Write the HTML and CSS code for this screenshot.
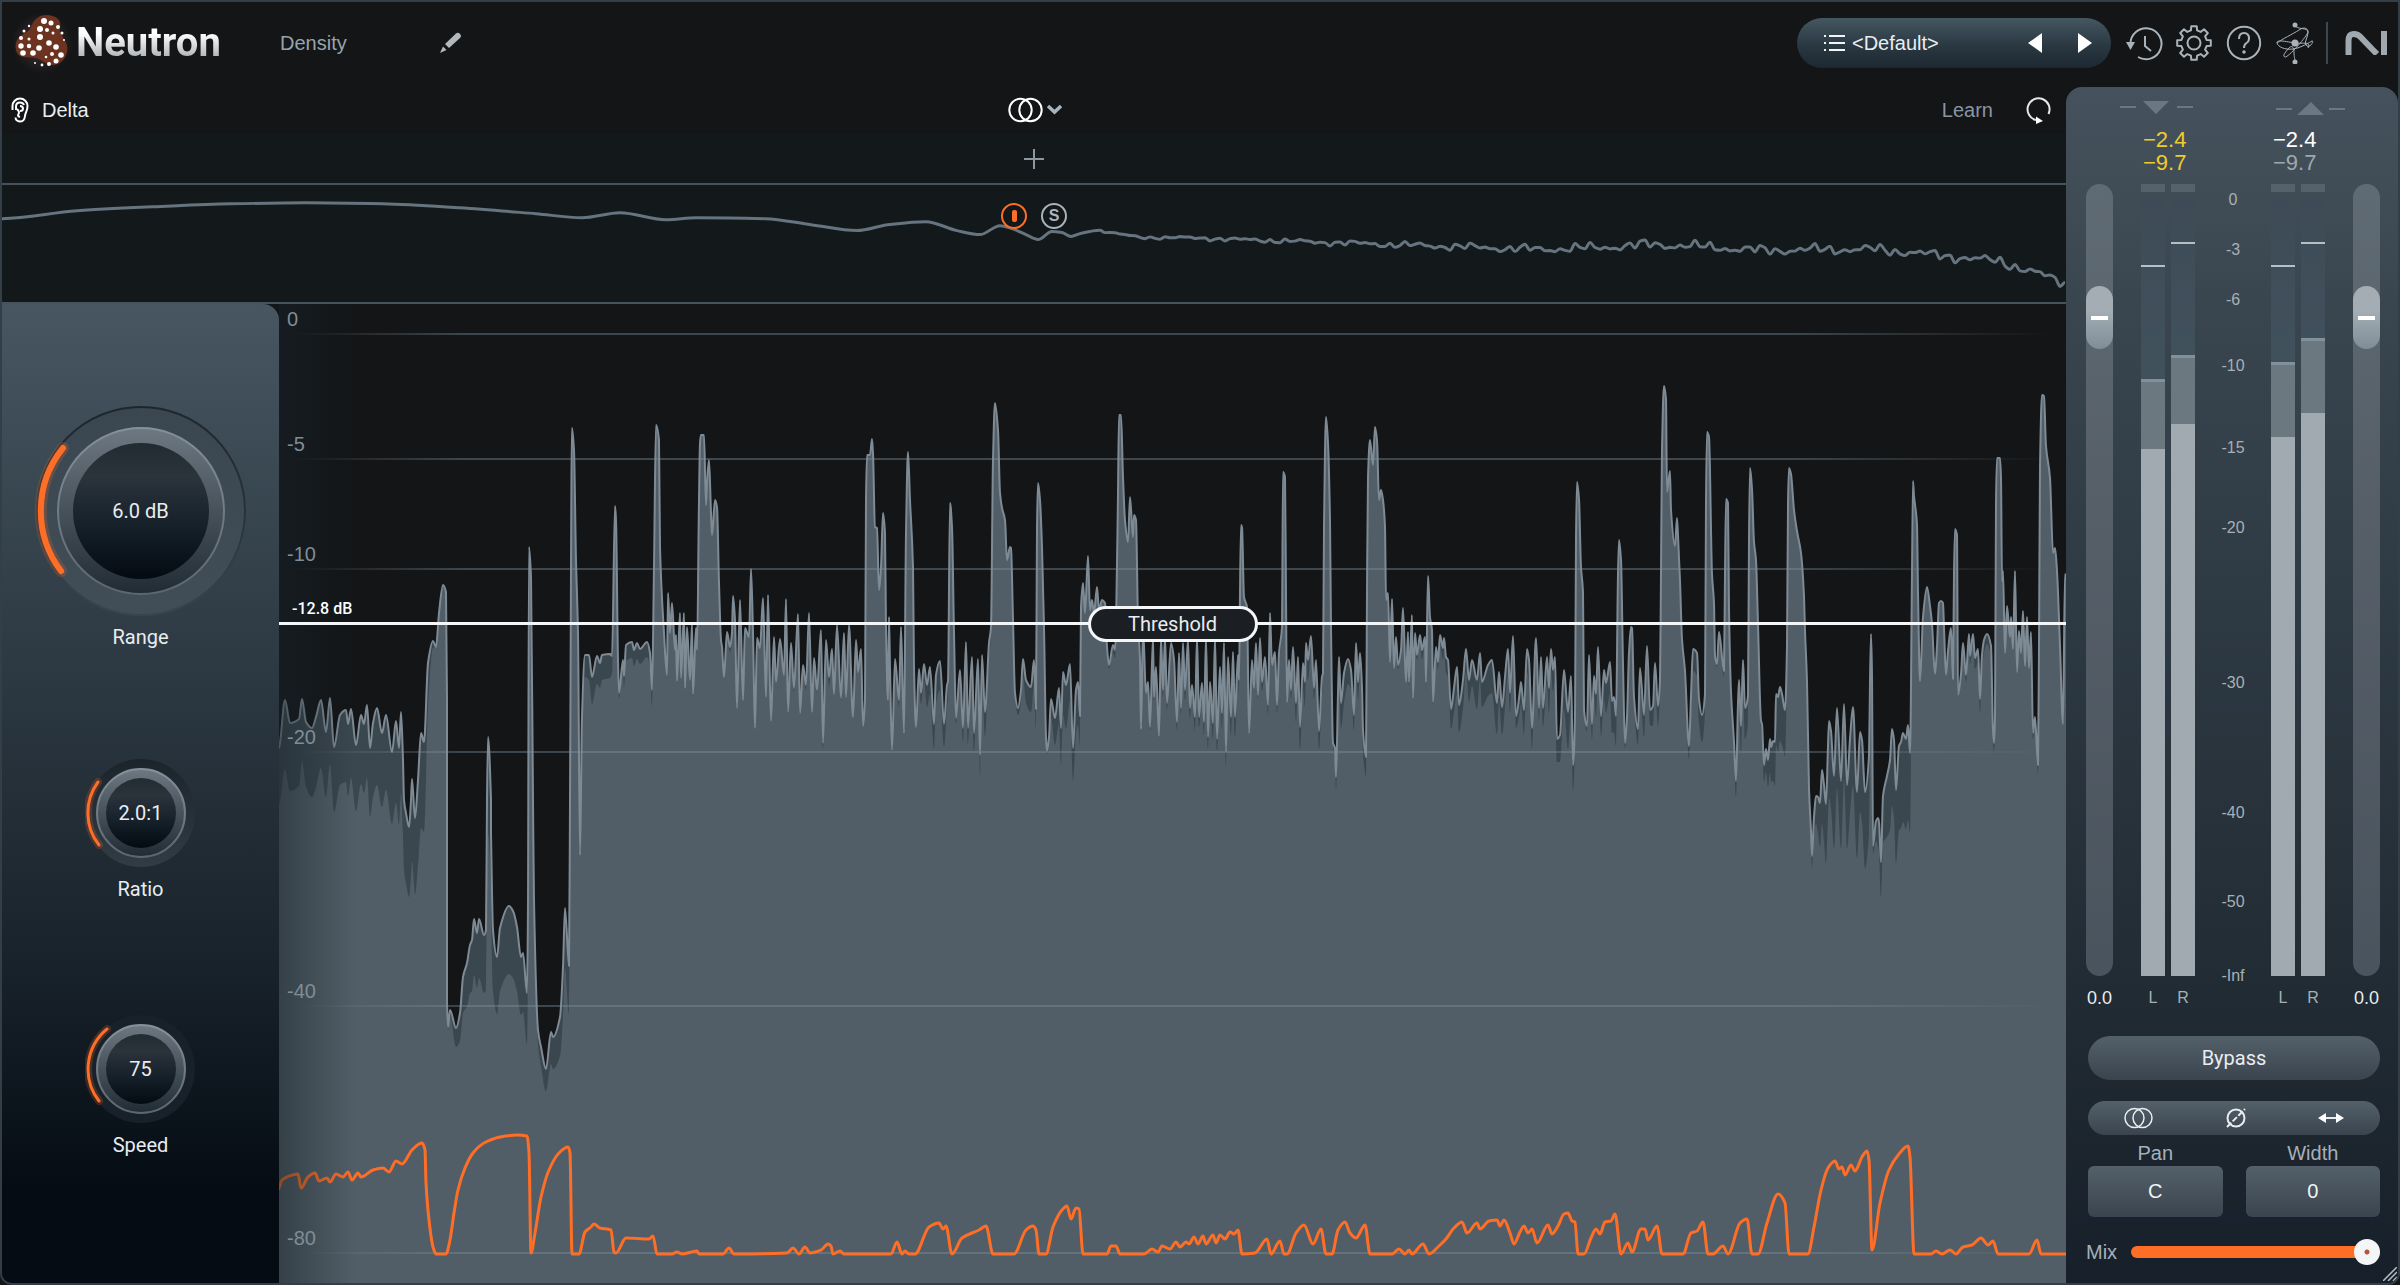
FILE: index.html
```html
<!DOCTYPE html>
<html lang="en">
<head>
    <meta charset="UTF-8">
    <meta name="viewport" content="width=device-width, initial-scale=1.0">
    <title>Neutron - Density</title>
    <link rel="stylesheet" href="styles.css">
</head>
<body>
<div id="plugin">
    <header id="topbar">
        <svg class="logo" viewBox="0 0 60 68" aria-hidden="true">
            <defs>
                <radialGradient id="glow"><stop offset="0.5" stop-color="#3a2a2c"/><stop offset="1" stop-color="#131517"/></radialGradient>
            </defs>
            <circle cx="30" cy="34" r="31" fill="url(#glow)" opacity=".7"/>
            <path d="M34 6c10 0 16 5 14 13-1 6 5 10 7 17 2 9-4 19-13 20-7 1-12-6-19-7S6 50 4 41s3-14 9-17 6-8 9-12 7-6 12-6z" fill="#6b3320"/>
            <g fill="#fff">
                <circle cx="32" cy="12" r="3"/><circle cx="39" cy="14" r="2.5"/><circle cx="46" cy="18" r="2"/>
                <circle cx="28" cy="20" r="3"/><circle cx="35" cy="21" r="2"/><circle cx="41" cy="24" r="1.5"/>
                <circle cx="50" cy="24" r="1.5"/><circle cx="52" cy="31" r="1"/><circle cx="17" cy="17" r="1.2"/>
                <circle cx="12" cy="22" r="1.5"/><circle cx="9" cy="29" r="2"/><circle cx="17" cy="30" r="1.5"/>
                <circle cx="28" cy="28" r="3"/><circle cx="9" cy="37" r="2.7"/><circle cx="17" cy="37" r="2.2"/>
                <circle cx="27" cy="39" r="2.8"/><circle cx="37" cy="34" r="2.8"/><circle cx="44" cy="38" r="2.8"/>
                <circle cx="11" cy="44" r="2.8"/><circle cx="21" cy="44" r="2.8"/><circle cx="40" cy="45" r="2"/>
                <circle cx="49" cy="46" r="2.8"/><circle cx="34" cy="48" r="1.3"/><circle cx="44" cy="52" r="2.5"/>
                <circle cx="37" cy="55" r="2"/><circle cx="30" cy="56" r="1.4"/><circle cx="23" cy="54" r="1"/>
            </g>
        </svg>
        <h1>Neutron</h1>
        <span class="module-name">Density</span>
        <button class="icon-btn" aria-label="Rename module">
            <svg width="24" height="24" viewBox="0 0 24 24"><path d="M7 13L18 2.500q2-1.500 4 .5t0 4L11 17z" fill="#b3b8bc"/><path d="M5 15.500l3.500 3.500L2 22z" fill="#b3b8bc"/></svg>
        </button>

        <div class="preset">
            <button class="preset-name">
                <svg width="22" height="18" viewBox="0 0 22 18" stroke="#f2f4f5" stroke-width="2"><path d="M0 2h2M5 2h16M0 9h2M5 9h16M0 16h2M5 16h16"/></svg>
                &lt;Default&gt;
            </button>
            <button class="step" aria-label="Previous preset"><svg width="14" height="20" viewBox="0 0 14 20"><path d="M14 0v20L0 10z" fill="#fff"/></svg></button>
            <button class="step" aria-label="Next preset"><svg width="14" height="20" viewBox="0 0 14 20"><path d="M0 0v20l14-10z" fill="#fff"/></svg></button>
        </div>

        <nav class="tools">
            <button class="icon-btn" aria-label="History">
                <svg width="40" height="40" viewBox="0 0 40 40"><path d="M6.500 21A15.500 15.500 0 1 1 14 34" /><path d="M21 13v10l6 5"/><path d="M2 19h9l-4.500 8z" fill="#aab3ba" stroke="none"/></svg>
            </button>
            <button class="icon-btn" aria-label="Settings">
                <svg width="40" height="40" viewBox="-20 -20 40 40"><circle r="6.500"/><path d="M-3.100-12.600L-2.700-16.800L2.700-16.800L3.100-12.600L6.700-11.100L10-13.800L13.800-10L11.100-6.700L12.600-3.100L16.800-2.700L16.800 2.700L12.600 3.100L11.100 6.700L13.800 10L10 13.800L6.700 11.100L3.100 12.600L2.700 16.800L-2.700 16.800L-3.100 12.600L-6.700 11.100L-10 13.800L-13.800 10L-11.100 6.700L-12.600 3.100L-16.800 2.700L-16.800-2.700L-12.600-3.100L-11.100-6.700L-13.800-10L-10-13.800L-6.700-11.100Z" stroke-linejoin="round"/></svg>
            </button>
            <button class="icon-btn" aria-label="Help">
                <svg width="40" height="40" viewBox="0 0 40 40"><circle cx="20" cy="20" r="16.200"/><path d="M15 16q0-6 5-6t5 5.500q0 3-2.500 4.500T20 25"/><circle cx="20" cy="29" r="1.800" fill="#aab3ba" stroke="none"/></svg>
            </button>
            <button class="icon-btn" aria-label="Connections">
                <svg width="40" height="42" viewBox="0 0 40 42" class="thin"><path d="M21 3C22 8 34 5 34 10S29 22 33 24 40 18 38 19 27 26 19 27 4 25 3 21 14 20 21 21 38 19 34 26"/><path d="M3 21C8 17 19 12 25 8S34 7 34 10 14 36 11 35 11 31 14 27 20 24 20 30 21 36 21 40"/><g fill="#aab3ba" stroke="none"><circle cx="21" cy="3" r="2.500"/><circle cx="21" cy="40" r="2.500"/><circle cx="21" cy="21" r="3.500"/></g></svg>
            </button>
        </nav>
        <svg class="brand" width="42" height="24" viewBox="0 0 42 24" aria-label="NI"><path d="M3.500 24V10q0-7 5-7t8 4L27 18q5 5 5 5" stroke="#a0a9b0" stroke-width="6"/><path d="M36 0h6v24h-6z" fill="#a0a9b0"/></svg>
    </header>

    <main id="workspace">
        <section id="module">
            <div class="module-bar">
                <button class="delta">
                    <svg width="18" height="26" viewBox="0 0 18 26"><path d="M1.500 13V9a7.500 7.500 0 0 1 15 0c0 5-2 6-2.500 10s-2 5.500-4.500 5.500S4.500 23 4.500 20.500M5 13V9.500q0-4 4-4 3 0 4 2.500M9 9q3 0 3 2.500T9 14M6 12q3 3 1.500 5T9 20" /></svg>
                    Delta
                </button>
                <button class="stereo-mode" aria-label="Stereo mode">
                    <svg width="54" height="26" viewBox="0 0 54 26"><circle cx="12.500" cy="13" r="11.200"/><circle cx="22.500" cy="13" r="11.200"/><path d="M40 9l6.500 6L53 9" stroke="#a9b3ba" stroke-width="3.500"/></svg>
                </button>
                <div class="learn">
                    <button>Learn</button>
                    <button class="icon-btn" aria-label="Restart learning">
                        <svg width="26" height="28" viewBox="0 0 26 28"><path d="M10 24A11 11 0 1 1 22.500 18" /><path d="M10 20.500v7.500l7-3z" fill="#fff" stroke="none"/></svg>
                    </button>
                </div>
            </div>
            <div class="bands">
                <button class="icon-btn" aria-label="Add band"><svg width="22" height="22" viewBox="0 0 22 22" stroke="#8c979f" stroke-width="2"><path d="M11 1v20M1 11h20"/></svg></button>
            </div>
            <div class="spectrum">
                <svg class="fill" viewBox="2 185 2064 118" preserveAspectRatio="none"><path id="spectrumLine"/></svg>
                <div class="band-tags">
                    <button class="tag on" aria-label="Band enabled"><i></i></button>
                    <button class="tag">S</button>
                </div>
            </div>

            <div class="editor">
                <aside class="knobs">
                    <div class="knob big">
                        <svg viewBox="0 0 220 220" aria-hidden="true">
                            <defs>
                                <linearGradient id="well" x2="0" y2="1"><stop stop-color="#3a4750"/><stop offset="1" stop-color="#414e58"/></linearGradient>
                                <linearGradient id="wellEdge" x2="0" y2="1"><stop stop-color="#1d262d"/><stop offset=".5" stop-color="#28323a"/><stop offset="1" stop-color="#39454e"/></linearGradient>
                                <linearGradient id="ring" x2="0" y2="1"><stop stop-color="#6d7882"/><stop offset="1" stop-color="#202b33"/></linearGradient>
                                <linearGradient id="ringEdge" x2="0" y2="1"><stop stop-color="#84909a"/><stop offset="1" stop-color="#5a6670"/></linearGradient>
                                <linearGradient id="face" x2="0" y2="1"><stop stop-color="#222b32"/><stop offset=".25" stop-color="#2b333b"/><stop offset=".6" stop-color="#16212a"/><stop offset="1" stop-color="#030a12"/></linearGradient>
                                <linearGradient id="wellDark" x2="0" y2="1"><stop stop-color="#1b242b"/><stop offset="1" stop-color="#323c45"/></linearGradient>
                            </defs>
                            <circle cx="110" cy="110" r="104" fill="url(#well)" stroke="url(#wellEdge)" stroke-width="2"/>
                            <circle cx="110" cy="110" r="83" fill="url(#ring)" stroke="url(#ringEdge)" stroke-width="2"/>
                            <circle cx="110" cy="110" r="68" fill="url(#face)"/>
                            <path class="halo" d="M32 47A100 100 0 0 0 30 170"/>
                            <path class="arc" d="M32 47A100 100 0 0 0 30 170"/>
                        </svg>
                        <input id="range" value="6.0 dB">
                        <label for="range">Range</label>
                    </div>
                    <div class="knob">
                        <svg viewBox="0 0 112 112" aria-hidden="true">
                            <circle cx="56" cy="56" r="54" fill="url(#wellDark)"/>
                            <circle cx="56" cy="56" r="44" fill="url(#ring)" stroke="url(#ringEdge)" stroke-width="2"/>
                            <circle cx="56" cy="56" r="35" fill="url(#face)"/>
                            <path class="halo" d="M13 25A52 52 0 0 0 14 88"/>
                            <path class="arc" d="M13 25A52 52 0 0 0 14 88"/>
                        </svg>
                        <input id="ratio" value="2.0:1">
                        <label for="ratio">Ratio</label>
                    </div>
                    <div class="knob">
                        <svg viewBox="0 0 112 112" aria-hidden="true">
                            <circle cx="56" cy="56" r="54" fill="#182129"/>
                            <circle cx="56" cy="56" r="44" fill="url(#ring)" stroke="url(#ringEdge)" stroke-width="2"/>
                            <circle cx="56" cy="56" r="35" fill="url(#face)"/>
                            <path class="halo" d="M22 16A52 52 0 0 0 14 88"/>
                            <path class="arc" d="M22 16A52 52 0 0 0 14 88"/>
                        </svg>
                        <input id="speed" value="75">
                        <label for="speed">Speed</label>
                    </div>
                </aside>

                <div class="plot">
                    <svg class="fill" viewBox="279 304 1787 979" preserveAspectRatio="none">
                        <defs>
                            <linearGradient id="fade"><stop stop-color="#7d929e" stop-opacity="0"/><stop offset=".1" stop-color="#7d929e" stop-opacity=".4"/><stop offset=".85" stop-color="#7d929e" stop-opacity=".4"/><stop offset="1" stop-color="#7d929e" stop-opacity="0"/></linearGradient>
                        </defs>
                        <path id="inputFill" fill="#3b474f"/>
                        <path id="outputFill" fill="#525e67"/>
                        <path id="inputLine"/>
                        <g id="grid" fill="url(#fade)"></g>
                        <path id="reductionLine"/>
                    </svg>
                    <div class="edge-fade"></div>
                    <div id="axis"></div>
                    <div class="threshold">
                        <span class="threshold-value">-12.8 dB</span>
                        <button>Threshold</button>
                    </div>
                </div>
            </div>
        </section>

        <aside id="output">
            <div class="io-arrows">
                <svg width="74" height="14" viewBox="0 0 74 14"><path d="M0 5h16v2H0zM57 5h16v2H57zM23 0h26L36 13z"/></svg>
                <svg width="70" height="14" viewBox="0 0 70 14"><path d="M0 7h16v2H0zM53 7h16v2H53zM21 14h27L35 1z"/></svg>
            </div>
            <div class="meters">
                <div class="readout in">&minus;2.4<br>&minus;9.7</div>
                <div class="readout out">&minus;2.4<br><span>&minus;9.7</span></div>
                <input class="fader left" type="range" value="86" aria-label="Input gain">
                <div class="pair pair-in"></div>
                <div class="scale" id="scale"></div>
                <div class="pair pair-out"></div>
                <input class="fader right" type="range" value="86" aria-label="Output gain">
                <span class="gain g1">0.0</span>
                <div class="lr lr1"><span>L</span><span>R</span></div>
                <div class="lr lr2"><span>L</span><span>R</span></div>
                <span class="gain g2">0.0</span>
            </div>
            <button class="bypass">Bypass</button>
            <div class="modes">
                <button aria-label="Sum to mono"><svg width="30" height="22" viewBox="0 0 30 22"><circle cx="10.500" cy="11" r="9.500"/><circle cx="18.500" cy="11" r="9.500"/></svg></button>
                <button aria-label="Invert phase"><svg width="20" height="22" viewBox="0 0 20 22"><circle cx="10" cy="11" r="8.500"/><path d="M1 20L19 2" stroke-dasharray="6 2"/></svg></button>
                <button aria-label="Swap channels"><svg width="26" height="12" viewBox="0 0 26 12"><path d="M5 6h16" stroke-width="2"/><path d="M0 6l8-5v10zM26 6l-8-5v10z" fill="#fff" stroke="none"/></svg></button>
            </div>
            <div class="fields">
                <label>Pan<input value="C"></label>
                <label>Width<input value="0"></label>
            </div>
            <div class="mix">
                <label for="mix">Mix</label>
                <input id="mix" type="range" value="100">
            </div>
            <svg class="grip" width="14" height="14" viewBox="0 0 14 14" stroke="#b5bdc3" stroke-width="1.500"><path d="M0 14L14 0M5 14l9-9M10 14l4-4"/></svg>
        </aside>
    </main>
</div>
<script src="script.js"></script>
</body>
</html>
```
FILE: styles.css
```css
* {
    box-sizing: border-box;
}
body {
    margin: 0;
    background: #131517;
    color: #e9edf0;
    font-family: "Liberation Sans", Arial, sans-serif;
    font-size: 20px;
    line-height: 24px;
}
button, input {
    font: inherit;
    color: inherit;
    background: none;
    border: 0;
    padding: 0;
    margin: 0;
}
svg {
    display: block;
    fill: none;
}
#plugin {
    height: 100vh;
    display: flex;
    flex-direction: column;
    border: 2px solid #343e47;
    border-radius: 0 0 12px 12px;
    overflow: hidden;
}

/* top bar */
#topbar {
    height: 84px;
    flex: none;
    display: flex;
    align-items: center;
    padding: 0 11px 2px 10px;
}
.logo {
    width: 60px;
    height: 68px;
}
h1 {
    margin: 0 0 0 4px;
    width: 204px;
    font: 700 40px/48px Roboto, sans-serif;
    background: linear-gradient(#fff 30%, #a9adb0 85%);
    -webkit-background-clip: text;
    background-clip: text;
    color: transparent;
}
.module-name {
    width: 158px;
    color: #98a3ac;
}
.preset {
    margin-left: auto;
    width: 314px;
    height: 50px;
    border-radius: 25px;
    background: linear-gradient(#455761, #2a3842 55%, #1c2832);
    display: flex;
    align-items: center;
    padding: 0 1px 0 27px;
}
.preset-name {
    flex: 1;
    display: flex;
    align-items: center;
    gap: 6px;
}
.step {
    width: 50px;
    display: flex;
    justify-content: center;
}
.tools {
    display: flex;
    gap: 10px;
    margin-left: 13px;
    padding-right: 12px;
    border-right: 2px solid #3d474f;
}
.tools svg {
    stroke: #aab3ba;
    stroke-width: 2;
}
.tools svg.thin {
    stroke-width: 1;
}
.brand {
    margin-left: 17px;
}

/* layout */
#workspace {
    flex: 1;
    min-height: 0;
    display: grid;
    grid-template-columns: 1fr 332px;
}
#module {
    display: flex;
    flex-direction: column;
    min-width: 0;
}
.module-bar {
    height: 48px;
    display: grid;
    grid-template-columns: 1fr auto 1fr;
    align-items: center;
    padding: 0 14px 0 9px;
}
.delta {
    display: flex;
    align-items: center;
    gap: 13px;
}
.delta svg {
    stroke: #fff;
    stroke-width: 2;
}
.stereo-mode {
    padding-left: 7px;
}
.stereo-mode svg {
    stroke: #fff;
    stroke-width: 2;
}
.learn {
    display: flex;
    align-items: center;
    justify-content: flex-end;
    gap: 33px;
    color: #8a96a0;
}
.learn svg {
    stroke: #e4e8ea;
    stroke-width: 2;
}
.bands {
    height: 51px;
    display: flex;
    align-items: center;
    justify-content: center;
    background: #13181b;
    border-bottom: 2px solid #46535c;
}
.spectrum {
    height: 119px;
    position: relative;
    background: #13181b;
    border-bottom: 2px solid #46535c;
}
.fill {
    position: absolute;
    inset: 0;
    width: 100%;
    height: 100%;
}
#spectrumLine {
    stroke: #65747e;
    stroke-width: 3;
    stroke-linejoin: round;
}
.band-tags {
    position: relative;
    display: flex;
    justify-content: center;
    gap: 14px;
    padding-top: 18px;
}
.tag {
    width: 26px;
    height: 26px;
    border: 2px solid #aab3ba;
    border-radius: 50%;
    color: #aab3ba;
    font: 700 16px/20px "Liberation Sans", sans-serif;
    display: flex;
    align-items: center;
    justify-content: center;
}
.tag.on {
    border-color: #ff6e26;
}
.tag i {
    width: 5px;
    height: 12px;
    border-radius: 2px;
    background: #ff6e26;
}
.editor {
    flex: 1;
    min-height: 0;
    display: flex;
}

/* knobs */
.knobs {
    width: 277px;
    display: flex;
    flex-direction: column;
    align-items: center;
    padding-top: 97px;
    border-radius: 0 16px 0 0;
    background: linear-gradient(#475661, #303d47 32%, #242f38 50%, #18222b 68%, #050c14 90%);
}
.knob {
    width: 112px;
    margin-bottom: 112px;
    position: relative;
    display: flex;
    flex-direction: column;
    align-items: center;
    font-family: Roboto, sans-serif;
}
.knob.big {
    width: 220px;
    margin-bottom: 108px;
}
.knob svg {
    width: 100%;
}
.knob input {
    position: absolute;
    top: 44px;
    left: 0;
    width: 100%;
    text-align: center;
}
.knob.big input {
    top: 98px;
}
.knob label {
    margin-top: 8px;
}
.knob.big label {
    margin-top: 4px;
}
.arc {
    stroke: #ff6e26;
    stroke-width: 3;
    stroke-linecap: round;
}
.halo {
    stroke: #ff6e26;
    stroke-opacity: .2;
    stroke-width: 8;
    stroke-linecap: round;
}
.big .arc {
    stroke-width: 6;
}
.big .halo {
    stroke-width: 12;
}

/* level plot */
.plot {
    flex: 1;
    position: relative;
    background: #131517;
    overflow: hidden;
}
#inputLine {
    stroke: #7e8b95;
    stroke-width: 2;
    stroke-linejoin: round;
}
#reductionLine {
    stroke: #ff6e26;
    stroke-width: 3;
    stroke-linejoin: round;
}
.edge-fade {
    position: absolute;
    inset: 0 auto 0 0;
    width: 76px;
    background: linear-gradient(90deg, rgba(24, 35, 42, .5), rgba(24, 35, 42, 0));
}
#axis span {
    position: absolute;
    left: 8px;
    color: #7f8d97;
    transform: translateY(-27px);
}
.threshold {
    position: absolute;
    left: 0;
    right: 0;
    top: 32.5%;
    height: 3px;
    background: #f4f6f7;
    font-family: Roboto, sans-serif;
}
.threshold-value {
    position: absolute;
    left: 13px;
    bottom: 4px;
    color: #fff;
    font-size: 16px;
    font-weight: 500;
}
.threshold button {
    position: absolute;
    left: 50%;
    top: -16px;
    width: 170px;
    height: 36px;
    margin-left: -85px;
    border: 3px solid #f4f6f7;
    border-radius: 18px;
    background: #1b1e23;
    color: #e9edf0;
}

/* output panel */
#output {
    position: relative;
    display: flex;
    flex-direction: column;
    margin-top: 1px;
    padding: 14px 18px 18px 20px;
    border-radius: 16px 16px 0 0;
    background: linear-gradient(#45525d, #3a464f 18%, #2e3a44 42%, #222c34 74%, #17202a);
}
.io-arrows {
    display: flex;
    justify-content: space-between;
    padding: 0 34px;
    margin-bottom: 13px;
}
.io-arrows svg {
    fill: #6b7882;
}
.meters {
    flex: 1;
    min-height: 0;
    display: grid;
    grid-template-columns: 27px 54px 20px 54px 27px;
    grid-template-rows: 46px 1fr 24px;
    column-gap: 28px;
    row-gap: 10px;
    color: #a6b0b7;
    font-size: 16px;
}
.readout {
    grid-row: 1;
    font-size: 22px;
    line-height: 23px;
    padding-left: 2px;
    color: #fff;
}
.readout span {
    color: #9ea8af;
}
.readout.in {
    grid-column: 2;
    color: #efcb2c;
}
.readout.out {
    grid-column: 4;
}
.fader {
    -webkit-appearance: none;
    appearance: none;
    writing-mode: vertical-lr;
    direction: rtl;
    grid-row: 2;
    width: 27px;
    height: 100%;
    border-radius: 14px;
    background: linear-gradient(#5f6b74, #565f68 40%, #4a545e);
}
.fader.left {
    grid-column: 1;
}
.fader.right {
    grid-column: 5;
}
.fader::-webkit-slider-thumb {
    -webkit-appearance: none;
    width: 27px;
    height: 63px;
    border-radius: 14px;
    background:
        linear-gradient(#fff, #fff) center / 17px 4px no-repeat,
        linear-gradient(#a3adb3, #a3adb3 40%, #7f8d99);
}
.pair {
    grid-row: 2;
    display: flex;
    gap: 6px;
}
.pair-in {
    grid-column: 2;
}
.pair-out {
    grid-column: 4;
}
.channel {
    flex: 1;
    display: flex;
    flex-direction: column;
    gap: 8px;
}
.clip {
    height: 8px;
    background: #56626b;
}
.bar {
    flex: 1;
    position: relative;
    background: linear-gradient(#3e4b57, #41515c 20%);
}
.bar div {
    position: absolute;
    left: 0;
    right: 0;
    bottom: 0;
}
.bar .hold {
    height: 2px;
    bottom: auto;
    background: #b5bfc5;
}
.bar .peak {
    background: #6c7880;
    border-top: 3px solid #82909b;
}
.bar .rms {
    background: #a0aab0;
}
.scale {
    grid-column: 3;
    grid-row: 2;
    position: relative;
    margin-top: 16px;
}
.scale span {
    position: absolute;
    left: 50%;
    transform: translate(-50%, -50%);
    white-space: nowrap;
}
.gain {
    grid-row: 3;
    justify-self: center;
    font-size: 18px;
    color: #e9edf0;
}
.g1 {
    grid-column: 1;
}
.g2 {
    grid-column: 5;
}
.lr {
    grid-row: 3;
    display: flex;
    gap: 6px;
    text-align: center;
}
.lr span {
    flex: 1;
}
.lr1 {
    grid-column: 2;
}
.lr2 {
    grid-column: 4;
}
.bypass, .modes {
    margin: 26px 0 21px 2px;
    height: 44px;
    border-radius: 22px;
    background: linear-gradient(#53606a, #3a444e);
    font-family: Roboto, sans-serif;
}
.modes {
    margin: 0 0 8px 2px;
    height: 34px;
    display: flex;
    align-items: center;
    justify-content: space-between;
    padding: 0 36px;
}
.modes svg {
    stroke: #e9edf0;
    stroke-width: 2;
}
.modes button:first-child svg {
    stroke-width: 1.5;
}
.fields {
    display: flex;
    justify-content: space-between;
    gap: 23px;
    padding-left: 2px;
    color: #a6b0b7;
    line-height: 20px;
    text-align: center;
}
.fields label {
    flex: 1;
}
.fields input {
    display: block;
    width: 100%;
    height: 51px;
    margin-top: 3px;
    border-radius: 6px;
    background: linear-gradient(#53606a, #3a444e);
    color: #f2f4f5;
    text-align: center;
}
.mix {
    display: flex;
    align-items: center;
    gap: 14px;
    margin-top: 22px;
    height: 26px;
    color: #a6b0b7;
}
.mix input {
    -webkit-appearance: none;
    appearance: none;
    flex: 1;
    min-width: 0;
    height: 12px;
    border-radius: 6px;
    background: #ff6e26;
}
.mix input::-webkit-slider-thumb {
    -webkit-appearance: none;
    width: 26px;
    height: 26px;
    border-radius: 50%;
    background: radial-gradient(circle, #b5563a 2px, #f4f5f6 3px);
}
.grip {
    position: absolute;
    right: 1px;
    bottom: 2px;
}
```
FILE: script.js
```js
// input level trace, x,y in plot units
const level = `279,748 280,743 285,700 290,723 299,719 302,699 306,722 312,728 316,717 321,700 326,732 330,698 334,747 340,715 346,710 348,724 351,709
356,745 361,715 364,724 367,705 370,748 373,723 377,708 382,733 386,715 392,752 396,721 399,748 401,712 403,760 404,800 406,813 409,827
411,800 412,779 415,818 418,780 421,733 424,742 428,663 433,641 436,647 439,613 443,585 446,592 447,700 447,1000 448,1027 450,1010 456,1028
460,1013 463,977 467,963 470,945 472,940 474,919 477,933 479,919 484,935 486,930 487,800 488,737 491,800 491,833 493,930 497,957 500,928
509,906 513,911 517,927 521,957 523,953 527,993 528,900 529,547 531,577 533,800 534,900 538,1030 541,1047 546,1069 551,1032 553,1037
560,1017 563,967 565,908 569,966 570,800 572,428 574,450 576,560 578,633 580,855 582,717 585,655 589,655 592,677 597,656 600,663 602,655
610,654 612,656 615,506 616,520 618,660 619,693 623,660 624,676 626,645 632,642 634,650 637,643 640,649 647,642 650,653 652,690 654,567
656,425 659,440 660,547 664,633 667,675 668,593 670,633 672,603 675,650 676,635 677,681 680,613 681,678 684,613 685,688 687,627 690,680
692,623 693,694 696,628 697,650 699,500 700,443 701,435 704,435 706,505 707,483 709,460 711,513 712,535 715,500 717,507 719,583 721,640
722,647 724,677 727,632 730,647 732,633 733,596 735,620 737,708 740,600 743,700 745,628 749,637 751,569 753,633 755,728 757,638 760,648
763,598 766,697 768,595 771,721 774,637 776,682 780,639 784,675 786,599 788,712 791,643 794,688 798,614 800,713 803,665 806,685 809,613
812,712 814,658 817,690 821,630 823,743 826,640 829,677 832,649 834,694 837,625 841,698 844,633 846,697 849,625 853,717 856,640 858,672
861,649 863,726 865,700 866,500 867,455 870,455 872,439 873,453 875,527 877,528 879,590 881,567 883,513 885,533 886,627 888,700 889,617
890,667 892,750 895,659 899,700 901,627 904,733 906,533 908,452 910,500 913,567 914,667 916,727 919,669 921,693 924,664 927,685 930,667
934,724 936,675 940,661 944,724 947,685 948,681 950,503 952,527 954,633 956,718 960,670 963,728 966,642 968,728 972,657 974,733 978,659
980,755 982,655 985,712 989,643 991,627 993,460 995,403 998,430 1000,493 1002,508 1005,520 1007,560 1010,547 1011,548 1013,620 1015,693
1018,708 1021,690 1023,659 1026,680 1031,687 1034,660 1036,709 1037,527 1038,483 1040,500 1042,547 1044,627 1046,737 1047,751 1049,737
1051,699 1055,718 1059,688 1061,728 1063,672 1066,685 1070,664 1073,748 1076,690 1078,682 1080,716 1081,607 1083,583 1085,613 1088,556
1090,610 1092,600 1094,613 1097,587 1099,610 1102,600 1105,603 1107,647 1109,665 1113,645 1115,650 1116,627 1118,493 1119,415 1121,415
1123,477 1125,520 1128,542 1130,497 1133,537 1134,515 1136,520 1138,620 1140,660 1141,729 1143,627 1146,693 1148,682 1150,727 1153,637
1154,697 1156,667 1159,736 1161,637 1163,690 1165,637 1167,703 1171,643 1174,660 1177,722 1179,653 1181,708 1183,643 1185,690 1188,640
1190,708 1192,685 1195,717 1197,637 1199,717 1202,683 1204,722 1206,637 1208,737 1210,682 1213,723 1215,637 1217,739 1220,667 1222,713
1224,643 1226,752 1228,657 1231,717 1233,652 1235,717 1238,655 1239,680 1240,593 1241,525 1242,527 1244,597 1247,607 1249,733 1252,660
1254,688 1256,643 1258,695 1260,638 1262,682 1265,657 1268,705 1270,613 1272,665 1275,652 1277,705 1279,653 1282,627 1283,472 1285,477
1286,593 1287,702 1289,660 1291,690 1293,647 1296,703 1298,657 1300,727 1303,663 1305,682 1306,643 1308,660 1311,636 1314,688 1316,660
1319,731 1322,677 1323,673 1324,527 1326,417 1328,443 1330,520 1331,627 1333,743 1335,748 1336,777 1338,693 1339,657 1341,703 1344,673
1348,659 1351,670 1354,715 1356,643 1358,682 1360,653 1362,688 1363,730 1366,757 1367,593 1368,477 1370,440 1373,465 1375,427 1377,440
1379,500 1381,490 1383,500 1385,527 1386,600 1388,593 1390,662 1392,599 1394,668 1396,637 1398,665 1401,650 1403,608 1406,682 1408,632
1409,682 1412,615 1413,698 1415,633 1417,655 1420,635 1422,650 1425,637 1426,682 1428,576 1430,617 1432,630 1433,702 1436,647 1438,662
1440,635 1443,648 1444,638 1446,657 1448,660 1451,709 1454,688 1457,667 1459,705 1463,680 1466,649 1469,680 1472,660 1477,680 1480,653
1482,682 1488,665 1492,660 1497,703 1499,672 1502,707 1505,677 1508,649 1510,693 1513,636 1516,716 1520,690 1521,682 1524,710 1527,649
1529,660 1532,728 1536,638 1539,708 1541,657 1543,708 1547,657 1549,688 1551,649 1553,670 1555,657 1557,739 1560,735 1564,670 1568,712
1571,676 1573,765 1575,717 1576,539 1577,482 1579,499 1581,567 1583,592 1584,710 1587,726 1589,655 1592,724 1594,676 1596,694 1598,647
1601,716 1604,670 1606,683 1610,662 1612,701 1614,697 1616,716 1618,574 1619,540 1621,560 1623,664 1625,743 1627,717 1629,653 1631,627
1632,628 1634,697 1638,729 1640,668 1644,715 1647,646 1650,710 1653,706 1655,663 1658,706 1660,681 1661,574 1662,449 1664,386 1666,399
1667,492 1670,471 1671,510 1675,546 1677,518 1678,535 1680,581 1682,639 1685,671 1689,746 1691,696 1693,649 1697,653 1699,699 1702,715
1705,694 1706,503 1707,432 1709,437 1712,574 1714,603 1715,656 1717,664 1719,632 1724,671 1725,574 1726,499 1728,503 1729,610 1731,692
1734,742 1736,781 1738,703 1739,680 1741,726 1743,660 1745,708 1748,696 1749,539 1750,468 1752,489 1754,542 1756,560 1758,624 1761,721
1762,724 1764,765 1766,749 1768,760 1770,739 1771,747 1773,741 1775,742 1776,694 1778,697 1780,687 1782,694 1785,710 1787,646 1788,503
1789,468 1791,474 1794,510 1797,531 1801,553 1804,596 1805,631 1807,681 1809,789 1811,831 1812,856 1814,817 1816,796 1818,797 1820,803
1822,770 1824,785 1826,804 1828,746 1829,721 1831,731 1834,776 1837,708 1841,781 1844,704 1847,785 1850,739 1853,707 1857,792 1860,732
1862,740 1865,792 1869,756 1870,681 1871,634 1872,674 1873,846 1876,821 1878,818 1879,822 1881,862 1883,796 1887,776 1890,760 1892,729
1894,740 1896,790 1899,746 1901,742 1903,733 1906,739 1908,725 1910,753 1912,574 1913,481 1914,496 1917,524 1918,592 1920,681 1923,617
1927,587 1930,606 1932,624 1935,674 1937,646 1939,603 1941,601 1943,603 1944,628 1946,675 1948,651 1951,628 1953,679 1954,574 1955,529
1957,535 1958,695 1961,674 1963,643 1966,675 1969,634 1970,656 1973,634 1975,658 1978,649 1980,699 1982,655 1984,640 1987,634 1991,646
1993,731 1994,743 1995,717 1996,503 1997,458 2000,458 2001,478 2002,581 2003,571 2005,653 2007,606 2010,637 2011,617 2013,649 2015,571
2017,672 2019,631 2021,653 2023,611 2025,666 2027,617 2029,668 2031,632 2033,733 2035,717 2038,765 2039,646 2040,467 2042,395 2044,396
2046,446 2050,478 2053,553 2055,548 2057,571 2060,646 2063,724 2065,574 2067,581`;

// gain reduction trace, 1254 is no reduction
const reduction = `278,1190 282,1180 287,1177 298,1174 301,1188 308,1177 315,1173 319,1181 327,1178 330,1182 336,1174 343,1177 348,1172 352,1180 358,1173
361,1177 373,1170 383,1168 389,1172 396,1161 402,1164 412,1150 422,1143 425,1150 426,1183 429,1220 433,1247 436,1254 446,1254 450,1240
454,1213 458,1190 465,1168 473,1153 484,1143 500,1137 517,1135 527,1136 529,1153 531,1253 535,1233 541,1197 549,1170 559,1153 568,1147
570,1153 572,1254 579,1254 585,1232 591,1227 594,1224 600,1228 611,1230 614,1252 616,1253 626,1238 649,1239 653,1236 657,1254 672,1254
677,1252 682,1254 697,1251 699,1254 723,1254 729,1248 734,1254 787,1253 793,1248 799,1254 805,1247 810,1253 821,1250 828,1244 831,1246
833,1254 840,1251 844,1254 891,1254 897,1242 902,1254 905,1251 909,1254 915,1254 929,1227 939,1223 943,1229 946,1226 952,1254 962,1238
979,1230 986,1226 993,1254 1014,1254 1026,1230 1033,1226 1036,1230 1039,1254 1046,1254 1053,1227 1062,1210 1067,1206 1071,1219 1076,1208
1079,1209 1083,1254 1107,1254 1111,1246 1116,1246 1120,1254 1144,1254 1152,1249 1158,1252 1162,1246 1170,1249 1176,1242 1180,1247
1186,1242 1189,1244 1194,1237 1198,1244 1203,1236 1206,1244 1213,1235 1216,1243 1220,1235 1225,1239 1230,1232 1234,1234 1238,1230
1242,1254 1255,1253 1267,1239 1271,1254 1280,1241 1284,1254 1287,1254 1296,1233 1304,1225 1313,1244 1321,1229 1326,1254 1332,1254
1338,1230 1345,1222 1350,1233 1356,1238 1365,1225 1370,1254 1392,1254 1399,1249 1405,1254 1409,1250 1412,1254 1423,1244 1429,1254
1439,1246 1446,1239 1454,1228 1462,1222 1467,1233 1477,1223 1480,1229 1489,1221 1497,1220 1500,1226 1504,1220 1510,1233 1514,1244
1520,1232 1524,1226 1528,1233 1532,1229 1537,1243 1548,1225 1552,1234 1558,1226 1564,1214 1568,1213 1572,1221 1575,1222 1578,1254
1584,1254 1591,1238 1596,1229 1600,1234 1605,1222 1611,1221 1615,1214 1621,1254 1628,1243 1632,1252 1641,1229 1645,1229 1648,1240
1657,1226 1662,1254 1683,1254 1691,1233 1697,1231 1703,1222 1708,1254 1713,1254 1723,1246 1728,1254 1740,1223 1747,1219 1752,1254
1758,1254 1767,1223 1778,1194 1785,1203 1789,1254 1808,1254 1814,1227 1821,1190 1828,1168 1835,1161 1839,1169 1842,1167 1845,1175
1851,1165 1855,1171 1862,1157 1867,1151 1869,1160 1872,1250 1880,1203 1889,1170 1899,1154 1908,1146 1910,1157 1914,1254 1931,1254
1936,1251 1942,1254 1950,1250 1956,1254 1963,1247 1972,1245 1981,1238 1988,1245 1993,1241 1998,1254 2029,1254 2037,1240 2041,1254 2070,1254`;

// pre-module spectrum, the smooth part; the top end gets bin noise below
const spectrum = `0,219 77,211 153,207 230,204 306,203 383,204 460,208 536,214 582,218 620,213 666,220 696,218 765,219 811,225 857,231 888,225
926,222 957,231 980,235 1000,226 1012,229 1026,235 1038,240 1052,232 1062,233 1071,237 1080,234 1100,231 1140,238 1180,238 1240,240
1300,242 1360,244 1420,246 1480,248 1540,250 1600,248 1650,245 1700,247 1760,251 1820,250 1880,250 1920,254 1960,258 2000,262 2040,275 2068,285`;

function parse(text) {
    return text.trim().split(/\s+/).map(p => p.split(',').map(Number));
}

// flat tangent at every peak and dip, so the curve never overshoots
function toPath(points) {
    const slope = points.map((p, i) => {
        const a = points[i - 1];
        const b = points[i + 1];
        if (!a || !b) return 0;
        const before = (p[1] - a[1]) / Math.max(0.5, p[0] - a[0]);
        const after = (b[1] - p[1]) / Math.max(0.5, b[0] - p[0]);
        return before * after <= 0 ? 0 : 2 * before * after / (before + after);
    });
    let d = 'M' + points[0].join(' ');
    for (let i = 1; i < points.length; i++) {
        const [x0, y0] = points[i - 1];
        const [x1, y1] = points[i];
        const h = (x1 - x0) / 3;
        d += `C${(x0 + h).toFixed(1)} ${(y0 + slope[i - 1] * h).toFixed(1)} ${(x1 - h).toFixed(1)} ${(y1 - slope[i] * h).toFixed(1)} ${x1} ${y1}`;
    }
    return d;
}

function valueAt(points, x) {
    for (let i = 1; i < points.length; i++) {
        if (x <= points[i][0]) {
            const [x0, y0] = points[i - 1];
            const [x1, y1] = points[i];
            return x1 === x0 ? y1 : y0 + (y1 - y0) * (x - x0) / (x1 - x0);
        }
    }
    return points[points.length - 1][1];
}

const levelPoints = parse(level);
const reductionPoints = parse(reduction);

// same dB is fewer pixels further down the axis
const outputPoints = levelPoints.map(([x, y]) => {
    const amount = 1254 - valueAt(reductionPoints, x);
    const factor = Math.min(1, Math.max(0.2, 1 - (y - 650) / 600));
    return [x, Math.round(y + amount * factor)];
});

const floor = 'L2067 1290L279 1290Z';
document.getElementById('inputLine').setAttribute('d', toPath(levelPoints));
document.getElementById('inputFill').setAttribute('d', toPath(levelPoints) + floor);
document.getElementById('outputFill').setAttribute('d', toPath(outputPoints) + floor);
document.getElementById('reductionLine').setAttribute('d', toPath(reductionPoints));

const spectrumPoints = parse(spectrum);
const noisy = spectrumPoints.filter(p => p[0] < 1100);
for (let x = 1100; x < 2068; x += 5) {
    const size = Math.min(4.5, 1 + (x - 1100) / 150);
    const wobble = Math.sin(x * 0.11) * 0.5 + Math.sin(x * 0.37) * 0.5 + Math.sin(x * 1.73) * 0.5;
    noisy.push([x, valueAt(spectrumPoints, x) + wobble * size]);
}
document.getElementById('spectrumLine').setAttribute('d', toPath(noisy));

// dB grid
const svgNs = 'http://www.w3.org/2000/svg';
[[0, 334], [-5, 459], [-10, 569], [-20, 752], [-40, 1006], [-80, 1253]].forEach(([db, y]) => {
    const line = document.createElementNS(svgNs, 'rect');
    line.setAttribute('x', 289);
    line.setAttribute('y', y - 1);
    line.setAttribute('width', 1765);
    line.setAttribute('height', 2);
    document.getElementById('grid').appendChild(line);

    const label = document.createElement('span');
    label.textContent = db;
    label.style.top = (y - 304) / 979 * 100 + '%';
    document.getElementById('axis').appendChild(label);
});

// meters: hold, peak and rms as percent from the top
function addChannels(selector, channels) {
    document.querySelector(selector).innerHTML = channels.map(([hold, peak, rms]) => `
        <div class="channel">
            <div class="clip"></div>
            <div class="bar">
                <div class="hold" style="top:${hold}%"></div>
                <div class="peak" style="top:${peak}%"></div>
                <div class="rms" style="top:${rms}%"></div>
            </div>
        </div>`).join('');
}
addChannels('.pair-in', [[8.4, 23.1, 32.1], [5.4, 20.0, 28.9]]);
addChannels('.pair-out', [[8.4, 20.9, 30.6], [5.4, 17.8, 27.4]]);

const marks = { '0': 0, '-3': 6.4, '-6': 12.9, '-10': 21.4, '-15': 32, '-20': 42.3, '-30': 62.3, '-40': 79, '-50': 90.5, '-Inf': 100 };
document.getElementById('scale').innerHTML = Object.entries(marks)
    .map(([text, top]) => `<span style="top:${top}%">${text}</span>`).join('');
```
